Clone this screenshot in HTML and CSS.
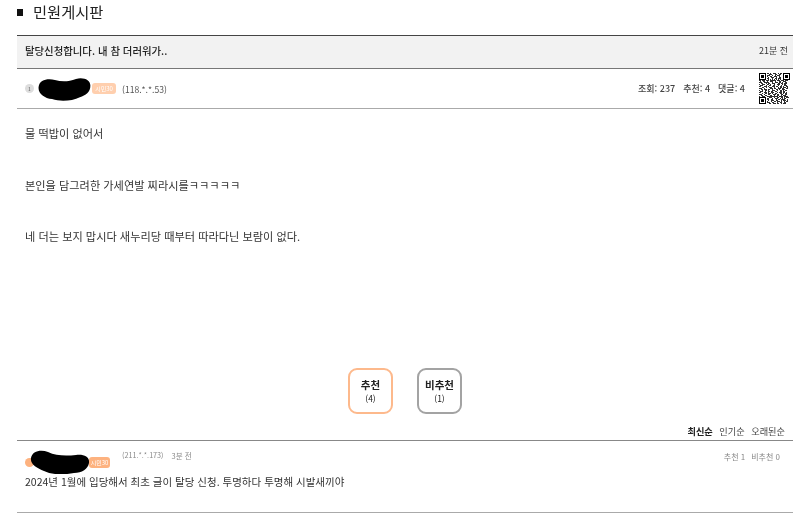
FILE: index.html
```html
<!DOCTYPE html>
<html lang="ko">
<head>
<meta charset="utf-8">
<title>민원게시판</title>
<link rel="stylesheet" href="styles.css">
</head>
<body>
<main class="page">
  <h1 class="board-title"><span class="square"></span>민원게시판</h1>
  <section class="post-head">
    <h2>탈당신청합니다. 내 참 더러워가..</h2>
    <span>21분 전</span>
  </section>
  <section class="post-meta">
    <div class="author">
      <span class="level">1</span>
      <svg class="blob" viewBox="0 0 56 24"><path d="M1 9C2 2 10 0 18 2C25 4 32 4 40 1C48 -1 55 2 55 8C55 15 50 18 44 20C36 24 24 25 15 22C7 21 0 16 1 9Z"/></svg>
      <span class="badge">시민30</span>
      <span class="ip">(118.*.*.53)</span>
    </div>
    <div class="stats">
      <span>조회: 237</span><span>추천: 4</span><span>댓글: 4</span>
      <svg class="qr" viewBox="0 0 33 33" shape-rendering="crispEdges"><path fill-rule="evenodd" d="M0 0h7v7h-7zM1 1v5h5v-5zM2 2h3v3h-3zM26 0h7v7h-7zM27 1v5h5v-5zM28 2h3v3h-3zM0 26h7v7h-7zM1 27v5h5v-5zM2 28h3v3h-3z"/><path class="qr-cells" d="M9 .5h2m1 0h1m2 0h3m2 0h1m1 0h2M8 1.5h1m2 0h3m3 0h2m2 0h2M9 2.5h3m2 0h1m2 0h1m1 0h3M8 3.5h2m2 0h2m2 0h3m2 0h1M10 4.5h1m2 0h3m2 0h1m2 0h2M8 5.5h3m3 0h1m2 0h2m1 0h3M8 6.5h1m1 0h1m1 0h1m1 0h1m1 0h1m1 0h1m1 0h1m1 0h1M9 7.5h2m3 0h2m3 0h2m2 0h1M0 8.5h2m1 0h3m1 0h3m2 0h2m1 0h3m2 0h2m2 0h3m1 0h3M1 9.5h1m2 0h2m3 0h1m2 0h3m2 0h1m3 0h2m3 0h3M0 10.5h3m2 0h3m1 0h2m3 0h1m2 0h3m1 0h2m2 0h1m2 0h2M2 11.5h2m3 0h1m2 0h2m2 0h3m3 0h2m1 0h3m1 0h3M0 12.5h1m2 0h3m2 0h3m1 0h1m3 0h1m2 0h3m3 0h1m1 0h2M1 13.5h3m3 0h1m3 0h2m2 0h2m3 0h1m2 0h2m2 0h3M0 14.5h2m3 0h3m2 0h1m3 0h3m1 0h2m2 0h3m1 0h1m2 0h2M3 15.5h2m2 0h2m2 0h3m2 0h1m3 0h1m1 0h3m1 0h3m1 0h1M0 16.5h3m2 0h1m2 0h1m3 0h3m1 0h2m2 0h3m2 0h2m2 0h2M2 17.5h2m1 0h3m2 0h2m2 0h1m3 0h2m1 0h1m3 0h3M0 18.5h1m2 0h1m2 0h3m1 0h1m3 0h3m2 0h1m2 0h2m2 0h1m1 0h2M1 19.5h3m2 0h1m3 0h2m1 0h2m2 0h2m3 0h3m1 0h2M0 20.5h2m3 0h3m2 0h1m2 0h3m3 0h1m1 0h3m2 0h2m1 0h1M3 21.5h1m2 0h2m2 0h3m1 0h1m2 0h2m3 0h2m2 0h1m1 0h2M0 22.5h3m2 0h1m2 0h1m1 0h2m3 0h3m1 0h2m2 0h3m2 0h2M2 23.5h2m2 0h3m3 0h2m2 0h1m2 0h2m2 0h2m1 0h3M0 24.5h1m2 0h3m2 0h2m1 0h2m2 0h2m2 0h1m1 0h5m1 0h2M9 25.5h2m2 0h2m2 0h3m1 0h1m3 0h1m2 0h3M8 26.5h1m2 0h3m2 0h1m2 0h2m2 0h1m1 0h1m1 0h1m1 0h3M9 27.5h2m3 0h1m2 0h3m2 0h1m2 0h1m1 0h2M8 28.5h3m2 0h2m3 0h1m1 0h2m1 0h5m2 0h1M10 29.5h1m2 0h3m2 0h2m3 0h1m2 0h3m1 0h1M8 30.5h2m3 0h1m2 0h2m1 0h3m1 0h1m3 0h1m1 0h2M9 31.5h3m2 0h2m3 0h1m2 0h3m2 0h2M8 32.5h1m2 0h2m2 0h3m1 0h2m2 0h1m2 0h3"/></svg>
    </div>
  </section>
  <section class="post-body">
    <p>물 떡밥이 없어서</p>
    <p>본인을 담그려한 가세연발 찌라시를ㅋㅋㅋㅋㅋ</p>
    <p>네 더는 보지 맙시다 새누리당 때부터 따라다닌 보람이 없다.</p>
  </section>
  <section class="votes">
    <button class="vote up"><b>추천</b><small>(4)</small></button>
    <button class="vote down"><b>비추천</b><small>(1)</small></button>
  </section>
  <nav class="sort"><b>최신순</b><span>인기순</span><span>오래된순</span></nav>
  <section class="comment">
    <div class="comment-top">
      <div class="comment-author">
        <span class="level orange"></span>
        <svg class="blob big" viewBox="0 0 60 24"><path d="M1 8C2 1 11 -1 18 2C26 6 36 6 46 5C54 4 60 7 59 13C58 19 52 23 44 23C34 25 22 25 14 21C7 18 0 14 1 8Z"/></svg>
        <span class="badge solid">시민30</span>
        <span class="ip">(211.*.*.173)</span>
        <span class="time">3분 전</span>
      </div>
      <div class="comment-votes"><span>추천 1</span><span>비추천 0</span></div>
    </div>
    <p>2024년 1월에 입당해서 최초 글이 탈당 신청. 투명하다 투명해 시발새끼야</p>
  </section>
</main>
</body>
</html>
```
FILE: styles.css
```css
* { box-sizing: border-box; }
html, body { margin: 0; padding: 0; }
body {
  width: 800px; height: 516px; overflow: hidden; background: #fff; color: #333;
  font-family: "Noto Sans CJK KR", "Noto Sans", sans-serif;
}
.page { padding: 0 7px 0 17px; filter: blur(.35px); }
.board-title {
  display: flex; align-items: center; height: 22px; margin: 0 0 13px; font-size: 15.3px; font-weight: 400; color: #222;
}
.square { width: 6px; height: 7px; margin: 3px 10px 0 0; background: #111; }
.post-head {
  display: flex; justify-content: space-between; align-items: center; height: 34px; padding: 0 5px 3px 8px;
  background: #f2f2f2; border-top: 1px solid #444; border-bottom: 1px solid #777;
  font-size: 9px; color: #333;
}
.post-head h2 { margin: 0; font-size: 10.4px; font-weight: 500; color: #222; }
.post-meta {
  display: flex; justify-content: space-between; align-items: center; height: 40px; padding: 0 3px 0 8px;
  border-bottom: 1px solid #aaa; font-size: 9px; color: #444;
}
.author, .comment-author { display: flex; align-items: center; }
.level {
  width: 9px; height: 9px; border-radius: 50%; background: #ddd; color: #555; font-size: 5px; line-height: 9px; text-align: center;
}
.blob { width: 55px; height: 23px; margin: 1px 0 0 3px; fill: #000; }
.badge {
  width: 24px; height: 11px; margin-left: 0; border-radius: 3px; background: #ffcfae; color: #fff; font-size: 6px; line-height: 11px; text-align: center;
}
.ip { margin-left: 6px; color: #555; font-size: 8.6px; }
.stats { display: flex; align-items: center; gap: 8px; font-weight: 500; }
.qr { width: 31px; height: 31px; margin-left: 6px; }
.qr-cells { fill: none; stroke: #222; stroke-width: 1; }
.post-body { height: 260px; padding: 17px 8px 0; font-size: 11.2px; color: #333; }
.post-body p { height: 51.5px; margin: 0; line-height: 14px; }
.votes { display: flex; justify-content: center; gap: 24px; height: 45px; margin-top: -1px; }
.vote {
  display: flex; flex-direction: column; align-items: center; justify-content: center; width: 45px; height: 46px; padding: 0 0 1px;
  background: #fff; border-radius: 9px; font-family: inherit; color: #222;
}
.vote b { font-size: 10.5px; line-height: 15px; font-weight: 700; }
.vote small { font-size: 8.5px; line-height: 12px; }
.up { border: 2px solid #fdb98c; }
.down { border: 2px solid #a3a3a3; }
.sort {
  display: flex; justify-content: flex-end; gap: 6.5px; height: 17px; margin-top: 10px; padding-right: 8px; font-size: 9.2px; line-height: 17px; color: #444;
}
.sort b { color: #222; font-weight: 700; }
.comment { height: 73px; border-top: 1px solid #888; border-bottom: 1px solid #aaa; padding: 9px 13px 0 8px; }
.comment-top { display: flex; justify-content: space-between; align-items: flex-start; height: 25px; font-size: 7.5px; color: #888; }
.comment-author { position: relative; }
.level.orange { background: #fdb27f; }
.blob.big { width: 60px; height: 24px; margin: 0 0 0 -4px; }
.badge.solid { width: 21px; margin-left: -1px; background: #fdb27f; }
.comment .ip { margin-left: 12px; font-size: 7.2px; }
.time { margin-left: 8px; }
.comment-top .ip, .comment-top .time { align-self: flex-start; margin-top: 0; color: #888; }
.comment-votes { display: flex; gap: 6px; font-size: 8px; padding-top: 1px; }
.comment p { margin: 0; font-size: 10.5px; line-height: 14px; color: #333; }
```
